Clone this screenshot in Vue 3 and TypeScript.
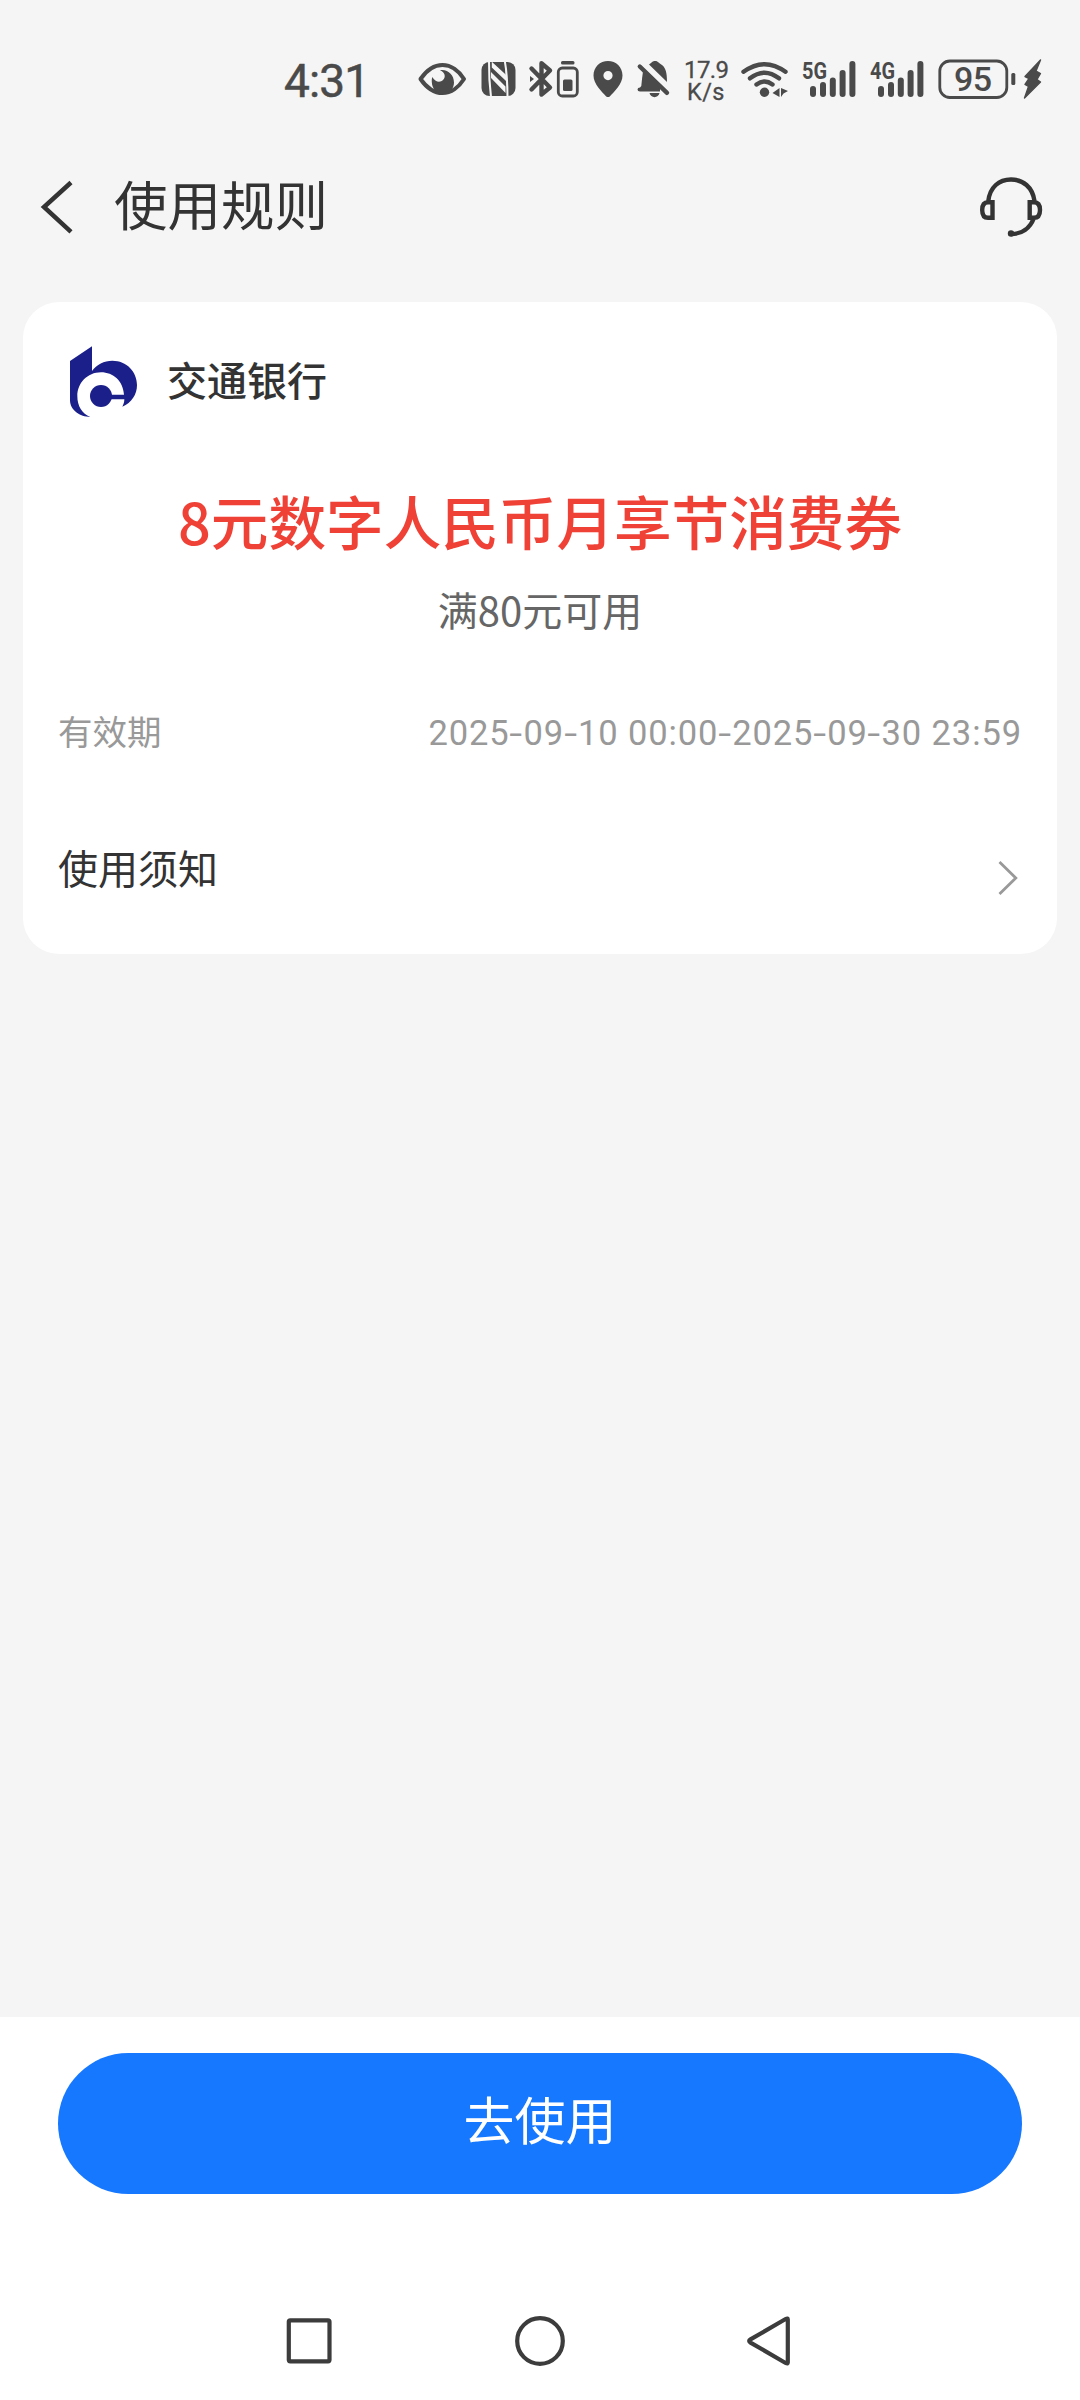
<script setup lang="ts">
interface SignalGroup {
  label: string
  x: number
}

interface Bar {
  x: number
  y: number
  h: number
}

const signals: SignalGroup[] = [
  { label: '5G', x: 0 },
  { label: '4G', x: 68 },
]

const bars: Bar[] = [
  { x: 10, y: 86, h: 11 },
  { x: 20, y: 82, h: 15 },
  { x: 29.8, y: 77.5, h: 19.5 },
  { x: 39.6, y: 70, h: 27 },
  { x: 49.4, y: 61, h: 36 },
]

const coupon = {
  bank: '交通银行',
  title: '8元数字人民币月享节消费券',
  condition: '满80元可用',
  validity: '2025-09-10 00:00-2025-09-30 23:59',
}

// Hyphens are split out so they can be drawn wider than the font's own.
const validityParts: string[] = coupon.validity.split(/(-)/)
</script>

<template>
  <div class="screen">
    <div class="status">
      <!-- clock -->
      <svg width="410" height="130" viewBox="0 0 410 130">
        <text x="284" y="97" font-size="46" class="clock" textLength="86" lengthAdjust="spacing">4:31</text>
      </svg>
      <!-- eye -->
      <svg width="64" height="130" viewBox="410 0 64 130">
        <path d="M420.500 79C426 71 434 65 442.500 65S459 71 464 79C459 87 451 93 442.500 93S426 87 420.500 79Z" fill="none" stroke="#4a4a4a" stroke-width="4" stroke-linejoin="round" />
        <path d="M440 70.200C448 69 454 75 454 82.500C454 89 449 94 443 94S432 89 431.800 82C431.700 80 431.800 78.500 432.300 77C435 82 440 83 443 80C446.500 76.500 444.500 72 440 70.200Z" />
      </svg>
      <!-- nfc -->
      <svg width="48" height="130" viewBox="474 0 48 130">
        <rect x="481.500" y="62" width="34" height="34" rx="8" />
        <g class="cut">
          <path d="M489 61Q488.800 80 491 97" />
          <path d="M492 77.500L504.500 90.500L504.500 87L492 74.500Z" />
          <path d="M504.800 61Q507.500 76 507.500 97" />
          <path d="M505.800 76L492.800 64V67L505.800 79.500Z" />
        </g>
      </svg>
      <!-- bluetooth and accessory battery -->
      <svg width="62" height="130" viewBox="522 0 62 130">
        <path d="M531.500 68.500L550 87.500L541.500 94.500V63.300L550 70.500L531.500 89.500" fill="none" stroke="#4a4a4a" stroke-width="4.400" stroke-linecap="round" stroke-linejoin="round" />
        <path d="M530 76L534 79L530 82Z" />
        <rect x="561" y="61" width="13.500" height="3.600" rx="1.500" />
        <rect x="558.300" y="68" width="19" height="28" rx="4" fill="none" stroke="#4a4a4a" stroke-width="2.800" />
        <rect x="563" y="79.500" width="9.500" height="11.500" rx="1.500" />
      </svg>
      <!-- location -->
      <svg width="46" height="130" viewBox="584 0 46 130">
        <path fill-rule="evenodd" d="M608 61C616 61 622.500 67 622.500 75.500C622.500 84 614 92 609.800 96.400Q608 97.800 606.200 96.400C602 92 593.500 84 593.500 75.500C593.500 67 600 61 608 61ZM608 71A4.600 4.600 0 1 0 608 80.200A4.600 4.600 0 1 0 608 71Z" />
      </svg>
      <!-- muted bell -->
      <svg width="48" height="130" viewBox="630 0 48 130">
        <path d="M643 71.500L660 88V91.500H640Q637.500 91.500 637.500 89.500T640 87.500L641.300 86Q642 78 643 71.500Z" />
        <path d="M649 64.500C651 63.500 652 61 655 61S658.500 63 660.500 64C666 67 667 73 667 82Z" />
        <path d="M649.500 93H659.500C658.500 98.500 650.500 98.500 649.500 93Z" />
        <path d="M639.800 66.500L667 92.800" stroke="#4a4a4a" stroke-width="4.400" stroke-linecap="round" />
      </svg>
      <!-- network speed -->
      <svg width="56" height="130" viewBox="678 0 56 130" class="speed">
        <text x="684" y="78" font-size="24" textLength="45">17.9</text>
        <text x="687" y="100" font-size="23.500" textLength="37.500">K/s</text>
      </svg>
      <!-- wifi -->
      <svg width="62" height="130" viewBox="734 0 62 130">
        <g fill="none" stroke="#4a4a4a" stroke-width="4.400" stroke-linecap="round">
          <path d="M743.500 71.800Q764.500 56.500 785.500 71.800" />
          <path d="M750 78.300Q764.500 67 779 78.300" />
          <path d="M756.500 84.500Q764.500 78.500 772.500 84.500" />
        </g>
        <circle cx="764.500" cy="92.300" r="4.700" />
        <path d="M772.500 93L779.500 88V97ZM781 88L788 91L783.500 93.500L781 97Z" />
      </svg>
      <!-- cellular signal -->
      <svg width="136" height="130" viewBox="796 0 136 130">
        <g v-for="s in signals" :key="s.label" :transform="`translate(${800 + s.x} 0)`">
          <text x="2" y="79" font-size="24.500" font-weight="700" textLength="25" lengthAdjust="spacingAndGlyphs">{{ s.label }}</text>
          <rect v-for="b in bars" :key="b.x" :x="b.x" :y="b.y" width="6" :height="b.h" rx="3" />
        </g>
      </svg>
      <!-- battery -->
      <svg width="148" height="130" viewBox="932 0 148 130">
        <rect x="939.800" y="61" width="67" height="36.500" rx="10" fill="none" stroke="#4a4a4a" stroke-width="2.800" />
        <text x="954" y="91" font-size="34" textLength="38">95</text>
        <rect x="1011.300" y="73" width="4" height="12" rx="1.500" />
        <path d="M1040.500 60L1025 76.500L1029 78.500L1025 84.500L1028.500 86.500L1024.500 98L1040.500 82L1037 79.500L1040.500 73.500L1036 71Z" stroke="#4a4a4a" stroke-width="1.400" stroke-linejoin="round" />
      </svg>
    </div>

    <header class="header">
      <svg class="back" width="40" height="60" viewBox="36 177 40 60">
        <path d="M71 182.500L44 207L71 231.800" fill="none" stroke="#333" stroke-width="4.500" />
      </svg>
      <h1>使用规则</h1>
      <svg class="service" width="70" height="70" viewBox="976 172 70 70">
        <g fill="none" stroke="#333" stroke-width="4.400">
          <path d="M988.300 201C990 187 999 179.500 1011 179.500S1032.500 187 1034.500 201" />
          <path d="M992.500 202.200V217.800H988C984 217.800 982.200 215 982.200 210S984 202.200 988 202.200Z" />
          <path d="M1029.700 202.200V217.800H1034C1038 217.800 1040 215 1040 210S1038 202.200 1034 202.200Z" />
          <path d="M1033.500 219C1030 228 1022 234 1011 234" />
        </g>
        <circle cx="1011" cy="233.500" r="3.200" fill="#333" />
      </svg>
    </header>

    <main class="card">
      <div class="bank">
        <svg width="67" height="72" viewBox="210 170 201 216">
          <path fill="#1b1f8a" d="M210 215L276 171V245C290 225 312 214 337 214C380 214 411 247 411 287C411 315 395 340 367 352C371 344 373 338 373 330H332V316H372C369 275 340 249 303 249C262 249 232 282 232 320C232 350 246 373 271 383C240 383 210 362 210 333Z" />
          <circle cx="303" cy="320" r="33" fill="#1b1f8a" />
        </svg>
        <span>{{ coupon.bank }}</span>
      </div>
      <h2>{{ coupon.title }}</h2>
      <p class="condition">{{ coupon.condition }}</p>
      <div class="row validity">
        <span>有效期</span>
        <span class="date"><span v-for="(part, i) in validityParts" :key="i" :class="{ dash: part === '-' }">{{ part }}</span></span>
      </div>
      <div class="row notice">
        <span>使用须知</span>
        <svg width="24" height="40" viewBox="996 859 24 40">
          <path d="M999.500 863L1015.800 879L999.500 895" fill="none" stroke="#999" stroke-width="2.800" />
        </svg>
      </div>
    </main>

    <footer class="footer">
      <button type="button">去使用</button>
      <nav class="nav">
        <svg width="60" height="60" viewBox="279 2311 60 60">
          <rect x="288.800" y="2320.300" width="40.700" height="41" rx="1.500" />
        </svg>
        <svg width="60" height="60" viewBox="510 2311 60 60">
          <circle cx="540" cy="2341" r="22.800" />
        </svg>
        <svg width="60" height="60" viewBox="741 2311 60 60">
          <path d="M787.800 2319.500V2362.500Q787.800 2364 786 2363.200L750.500 2342.600Q747.800 2341 750.500 2339.400L786 2318.800Q787.800 2318 787.800 2319.500Z" />
        </svg>
      </nav>
    </footer>
  </div>
</template>

<style>
body {
  margin: 0;
}
</style>

<style scoped>
.screen {
  display: flex;
  flex-direction: column;
  width: 1080px;
  height: 2400px;
  background: #f5f5f5;
  color: #333;
  font-family: "Noto Sans CJK SC", sans-serif;
}

.screen svg {
  display: block;
  flex: none;
}

.status {
  display: flex;
  height: 130px;
  fill: #4a4a4a;
  font-family: Roboto, sans-serif;
  font-weight: 500;
}

.clock {
  font-weight: 400;
  stroke: #4a4a4a;
  stroke-width: 0.500px;
}

.speed {
  font-weight: 400;
  stroke: #4a4a4a;
  stroke-width: 0.300px;
}

.cut {
  fill: #f5f5f5;
  stroke: #f5f5f5;
  stroke-width: 2px;
}

.header {
  display: flex;
  align-items: center;
  box-sizing: border-box;
  height: 154px;
  padding: 0 34px 0 36px;
}

h1 {
  flex: 1;
  margin: 0 0 9px 38px;
  font-size: 53.500px;
  font-weight: 400;
  line-height: 80px;
}

.card {
  display: flex;
  flex-direction: column;
  box-sizing: border-box;
  height: 652px;
  margin: 18px 23px 0;
  padding: 44px 35px 0;
  background: #fff;
  border-radius: 36px;
}

.bank {
  display: flex;
  align-items: center;
  height: 72px;
  padding-left: 12px;
  gap: 30px;
  font-size: 40px;
  font-weight: 500;
}

.bank span {
  line-height: 64px;
  margin-bottom: 6px;
}

h2 {
  margin: 60px 0 0;
  color: #ef4136;
  font-size: 57.600px;
  font-weight: 500;
  line-height: 84px;
  text-align: center;
  white-space: nowrap;
}

.condition {
  margin: 17px 0 0;
  color: #666;
  font-size: 40px;
  line-height: 60px;
  text-align: center;
}

.row {
  display: flex;
  align-items: center;
  justify-content: space-between;
}

.validity {
  height: 50px;
  margin-top: 66px;
  color: #999;
  font-size: 34.500px;
  line-height: 50px;
}

.date {
  padding-top: 5px;
  font-family: Roboto, sans-serif;
  letter-spacing: 0.900px;
  white-space: nowrap;
}

.dash {
  display: inline-block;
  margin: 0 1.700px;
  transform: scaleX(1.350);
}

.notice {
  height: 60px;
  margin-top: 82px;
  font-size: 40px;
  line-height: 60px;
}

.notice svg {
  margin: 22px 2px 0 0;
}

.footer {
  display: flex;
  flex-direction: column;
  box-sizing: border-box;
  height: 383px;
  margin-top: auto;
  padding: 36px 58px 0;
  background: #fff;
}

button {
  height: 141px;
  padding: 0 0 11px;
  border: 0;
  border-radius: 71px;
  background: #1677ff;
  color: #fff;
  font-family: inherit;
  font-size: 51px;
  line-height: 80px;
}

.nav {
  display: flex;
  justify-content: center;
  gap: 171px;
  margin-top: 117px;
  fill: none;
  stroke: #3c3c3c;
  stroke-width: 4.200px;
}
</style>
